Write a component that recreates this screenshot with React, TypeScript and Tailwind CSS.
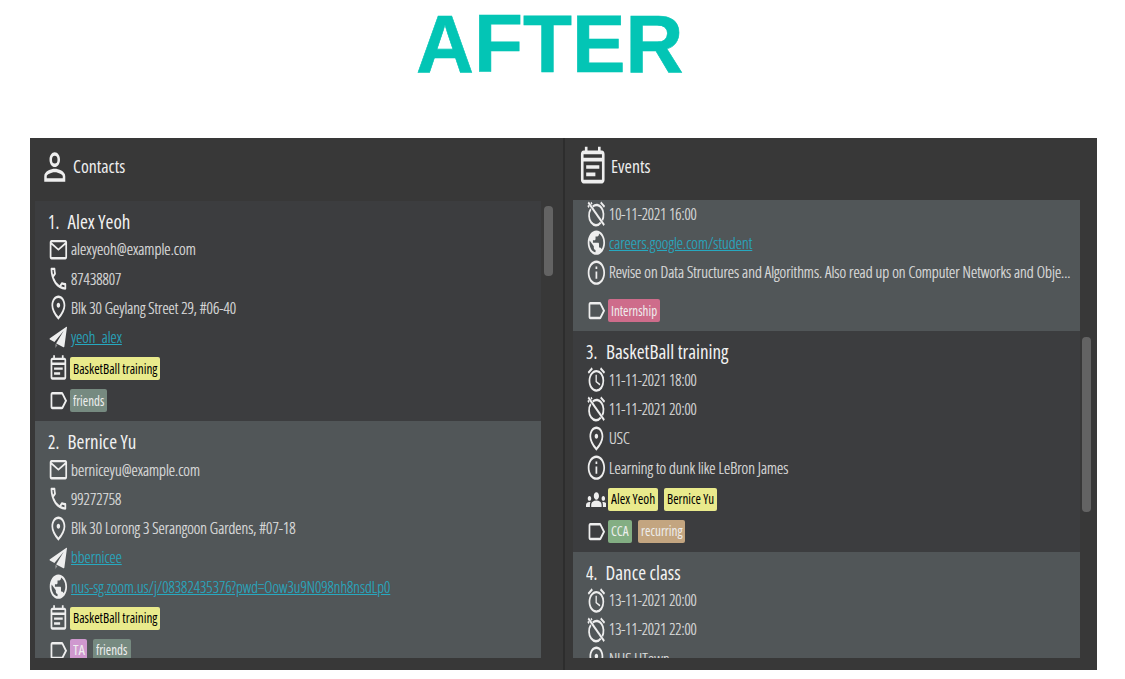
import { ReactNode, useLayoutEffect, useRef, useState } from "react";
import {
  MdAccessAlarm,
  MdGroups,
  MdInfoOutline,
  MdLabelOutline,
  MdMailOutline,
  MdOutlineEventNote,
  MdOutlinePhone,
  MdOutlinePlace,
  MdPersonOutline,
  MdPublic,
} from "react-icons/md";
import type { IconType } from "react-icons";

/** A single line of text, condensed horizontally to an exact width. */
function Fit({ w, className = "", children }: { w: number; className?: string; children: ReactNode }) {
  const ref = useRef<HTMLSpanElement>(null);
  const [scale, setScale] = useState(1);
  useLayoutEffect(() => {
    if (ref.current) setScale(w / ref.current.offsetWidth);
  }, [w]);
  return (
    <span className="block shrink-0" style={{ width: w }}>
      <span className="block w-max origin-left" style={{ transform: `scaleX(${scale})` }}>
        <span ref={ref} className={`block w-max whitespace-pre ${className}`}>
          {children}
        </span>
      </span>
    </span>
  );
}

/** Paper plane, sharing the 24-unit grid of the other icons. */
const PaperPlane: IconType = (props) => (
  <svg viewBox="0 0 24 24" fill="currentColor" preserveAspectRatio="none" className={props.className}>
    <path d="M21.3 3.9 2.2 13.3c-.5.3-.5.8 0 1l5.2 2 10.7-9.1-8.6 10.2v.3l8.3 2.9c.6.2 1 0 1.1-.6L21.9 4.4c.1-.5-.2-.7-.6-.5z" />
    <path d="M8.6 18v3.3l2.3-2.4z" fillOpacity=".5" />
  </svg>
);

/** Alarm clock struck through by a diagonal bar. */
const ClockOff: IconType = (props) => (
  <svg viewBox="0 0 24 24" fill="none" stroke="currentColor" strokeWidth="2" preserveAspectRatio="none" className={props.className}>
    <path d="M7.8 6.2A8 8 0 0 1 18.8 17.4M17 19.3A8 8 0 0 1 5.5 8.2" />
    <path d="M17 2.8l4.4 3.7M6.9 3.1 5.8 4M3.5 5.6l-1.3 1" />
    <path d="M2.6 2.7 21 21.4" />
  </svg>
);

function Glyph({ icon: Icon, className = "h-[29.3px] w-[20.8px]" }: { icon: IconType; className?: string }) {
  return <Icon preserveAspectRatio="none" className={`block shrink-0 text-[#eeeeee] ${className}`} />;
}

type Line = { icon: IconType; text: string; w: number; link?: boolean };
type Chip = { text: string; w: number; tone: string };
type Item = { title?: [string, string, number]; lines: Line[]; people?: Chip[]; peopleIcon?: IconType; tags?: Chip[] };

const yellow = "bg-[#e9ea8c] text-black font-medium";
const friends = "bg-[#768a80] text-[#eeeeee]";

const contacts: Item[] = [
  {
    title: ["1.", "Alex Yeoh", 63],
    lines: [
      { icon: MdMailOutline, text: "alexyeoh@example.com", w: 124.5 },
      { icon: MdOutlinePhone, text: "87438807", w: 50 },
      { icon: MdOutlinePlace, text: "Blk 30 Geylang Street 29, #06-40", w: 165 },
      { icon: PaperPlane, text: "yeoh_alex", w: 51, link: true },
    ],
    peopleIcon: MdOutlineEventNote,
    people: [{ text: "BasketBall training", w: 84.5, tone: yellow }],
    tags: [{ text: "friends", w: 31.5, tone: friends }],
  },
  {
    title: ["2.", "Bernice Yu", 69],
    lines: [
      { icon: MdMailOutline, text: "berniceyu@example.com", w: 129 },
      { icon: MdOutlinePhone, text: "99272758", w: 50 },
      { icon: MdOutlinePlace, text: "Blk 30 Lorong 3 Serangoon Gardens, #07-18", w: 224.5 },
      { icon: PaperPlane, text: "bbernicee", w: 51, link: true },
      { icon: MdPublic, text: "nus-sg.zoom.us/j/08382435376?pwd=Oow3u9N098nh8nsdLp0", w: 319, link: true },
    ],
    peopleIcon: MdOutlineEventNote,
    people: [{ text: "BasketBall training", w: 84.5, tone: yellow }],
    tags: [
      { text: "TA", w: 11.5, tone: "bg-[#cf98cf] text-[#eeeeee]" },
      { text: "friends", w: 31.5, tone: friends },
    ],
  },
];

const events: Item[] = [
  {
    lines: [
      { icon: ClockOff, text: "10-11-2021 16:00", w: 88 },
      { icon: MdPublic, text: "careers.google.com/student", w: 143, link: true },
      {
        icon: MdInfoOutline,
        text: "Revise on Data Structures and Algorithms. Also read up on Computer Networks and Obje...",
        w: 461.5,
      },
    ],
    tags: [{ text: "Internship", w: 46.5, tone: "bg-[#ce6c8b] text-[#eeeeee]" }],
  },
  {
    title: ["3.", "BasketBall training", 122.5],
    lines: [
      { icon: MdAccessAlarm, text: "11-11-2021 18:00", w: 88 },
      { icon: ClockOff, text: "11-11-2021 20:00", w: 88 },
      { icon: MdOutlinePlace, text: "USC", w: 21 },
      { icon: MdInfoOutline, text: "Learning to dunk like LeBron James", w: 179.5 },
    ],
    peopleIcon: MdGroups,
    people: [
      { text: "Alex Yeoh", w: 44, tone: yellow },
      { text: "Bernice Yu", w: 47.5, tone: yellow },
    ],
    tags: [
      { text: "CCA", w: 18, tone: "bg-[#83ae83] text-[#eeeeee]" },
      { text: "recurring", w: 41.5, tone: "bg-[#c3a580] text-[#eeeeee]" },
    ],
  },
  {
    title: ["4.", "Dance class", 75],
    lines: [
      { icon: MdAccessAlarm, text: "13-11-2021 20:00", w: 88 },
      { icon: ClockOff, text: "13-11-2021 22:00", w: 88 },
      { icon: MdOutlinePlace, text: "NUS UTown", w: 61 },
    ],
  },
];

function ChipRow({ icon, chips }: { icon: IconType; chips: Chip[] }) {
  return (
    <div className="flex h-[31.9px] items-center">
      <Glyph icon={icon} />
      <div className="ml-[1.5px] flex gap-[6px]">
        {chips.map((c) => (
          <div key={c.text} className={`flex h-[23px] items-center rounded-[2px] px-[3px] pb-px text-[14px] ${c.tone}`}>
            <Fit w={c.w}>{c.text}</Fit>
          </div>
        ))}
      </div>
    </div>
  );
}

function Card({ item, light }: { item: Item; light: boolean }) {
  return (
    <div className={`shrink-0 pb-[4.4px] pl-[12.6px] ${light ? "bg-[#515658]" : "bg-[#3c3d3f]"}`}>
      {item.title && (
        <div className="flex h-[34px] items-center pt-[9px] text-[19px] leading-[25px] text-[#f2f2f2]">
          <div className="w-[20px]">
            <Fit w={11}>{item.title[0]}</Fit>
          </div>
          <Fit w={item.title[2]}>{item.title[1]}</Fit>
        </div>
      )}
      {item.lines.map((l) => (
        <div key={l.text} className="flex h-[29.3px] items-center">
          <Glyph icon={l.icon} />
          <div className="ml-[3.1px] text-[17px] leading-[24px] font-light [-webkit-text-stroke:0.2px_currentColor]">
            <Fit w={l.w} className={l.link ? "text-[#27a9c0] underline" : "text-[#e2e2e2]"}>
              {l.text}
            </Fit>
          </div>
        </div>
      ))}
      <div className="h-[1px]" />
      {item.people && item.peopleIcon ? <ChipRow icon={item.peopleIcon} chips={item.people} /> : <div className="h-[7px]" />}
      {item.tags && <ChipRow icon={MdLabelOutline} chips={item.tags} />}
    </div>
  );
}

export default function App() {
  return (
    <div
      className="flex h-[679px] w-[1125px] flex-col overflow-hidden bg-white [font-stretch:75%]"
      style={{ fontFamily: '"Open Sans", "Noto Sans", sans-serif' }}
    >
      <h1 className="h-[138px] shrink-0 pl-[416px] font-['Liberation_Sans',sans-serif] text-[82px] leading-[88px] font-bold text-[#03c5b5] [-webkit-text-stroke:0.6px_#03c5b5] [font-kerning:none]">
        <Fit w={267}>AFTER</Fit>
      </h1>
      <div className="ml-[30px] flex h-[532px] w-[1067px] shrink-0 bg-[#383838]">
        <section className="flex w-[533px] flex-col pl-[5px]">
          <header className="flex h-[62px] items-center pl-[4px] pb-[4.5px] text-[18px] text-[#eeeeee]">
            <Glyph icon={MdPersonOutline} className="h-[44px] w-[31.5px]" />
            <div className="ml-[2.5px]">
              <Fit w={52.5}>Contacts</Fit>
            </div>
          </header>
          <div className="flex h-[458.4px]">
            <div className="flex w-[506px] flex-col overflow-hidden pt-[0.6px]">
              {contacts.map((c, i) => (
                <Card key={i} item={c} light={i === 1} />
              ))}
            </div>
            <div className="ml-[2.5px] mt-[6px] h-[69.5px] w-[9px] rounded-[4px] bg-[#636363]" />
          </div>
        </section>
        <div className="w-[2px] bg-[#2d2d2d]" />
        <section className="flex flex-1 flex-col pl-[8px]">
          <header className="flex h-[62px] items-center pl-[4px] pb-[4.5px] text-[18px] text-[#eeeeee]">
            <Glyph icon={MdOutlineEventNote} className="h-[44px] w-[31.5px]" />
            <div className="ml-[2.3px]">
              <Fit w={39.5}>Events</Fit>
            </div>
          </header>
          <div className="flex h-[458.4px]">
            <div className="flex w-[506.5px] flex-col overflow-hidden pt-[0.4px]">
              <div className="-mt-[1.4px] flex shrink-0 flex-col">
                {events.map((e, i) => (
                  <Card key={i} item={e} light={i !== 1} />
                ))}
              </div>
            </div>
            <div className="ml-[2.5px] mt-[136.5px] h-[175.5px] w-[9px] rounded-[4px] bg-[#636363]" />
          </div>
        </section>
      </div>
    </div>
  );
}
